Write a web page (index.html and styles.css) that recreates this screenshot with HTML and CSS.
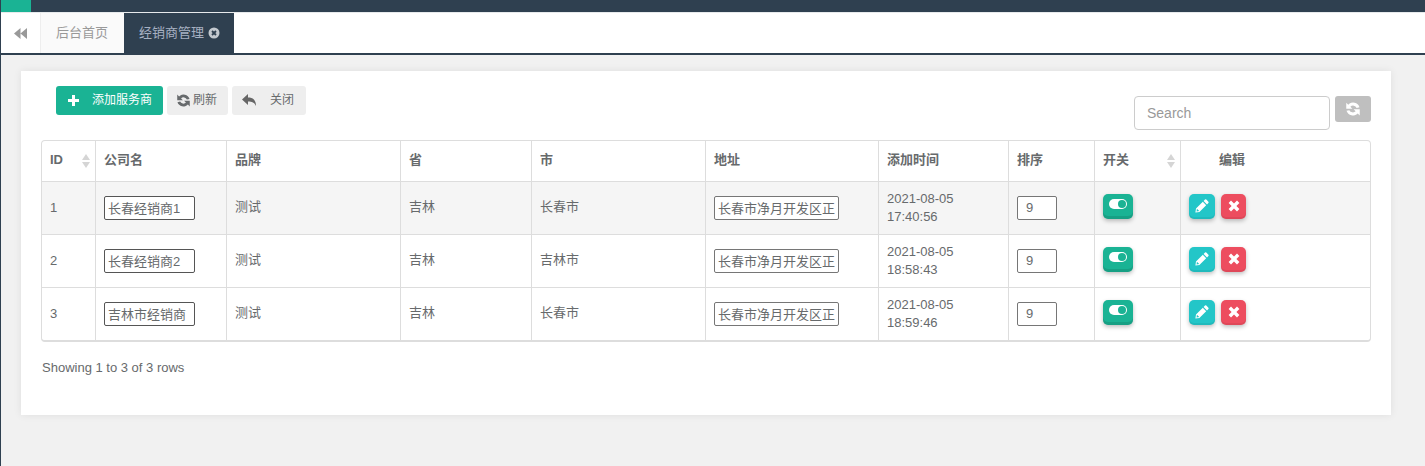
FILE: index.html
```html
<!DOCTYPE html>
<html lang="zh">
<head>
<meta charset="utf-8">
<title>经销商管理</title>
<link rel="stylesheet" href="styles.css">
</head>
<body>
<svg class="sprite" width="0" height="0" aria-hidden="true">
  <symbol id="i-refresh" viewBox="1.4 1.4 11.2 11.2"><path d="M12.200 5.600A5.400 5.400 0 0 0 3.200 3.500L1.600 1.900v4.900h4.900L4.900 5.200a3.100 3.100 0 0 1 5 .9zM1.800 8.400a5.400 5.400 0 0 0 9 2.100l1.600 1.600V7.200H7.500L9.100 8.800a3.100 3.100 0 0 1-5-.9z" fill="currentColor"/></symbol>
  <symbol id="i-edit" viewBox="0 0 14 14"><path d="M10 .6a1 1 0 0 1 1.300 0l2.100 2.100a1 1 0 0 1 0 1.300L12 5.400 8.600 2zM7.800 2.800l3.400 3.400-6.800 6.800L.4 13.600 1 9.600zM1.900 9.800l-.3 2.600 2.600-.3z" fill="currentColor" fill-rule="evenodd"/></symbol>
  <symbol id="i-x" viewBox="0 0 12 12"><path d="M3 .6L6 3.600l3-3L11.400 3l-3 3 3 3L9 11.400l-3-3-3 3L.6 9l3-3-3-3z" fill="currentColor"/></symbol>
</svg>
<header class="topbar"><div class="topbar-mark"></div></header>
<nav class="tabs">
  <div class="tab-back">
    <svg width="13" height="11" viewBox="0 0 13 11"><path d="M6.500 0v11L0 5.500zM13 0v11L6.500 5.500z" fill="#999"/></svg>
  </div>
  <div class="tab">后台首页</div>
  <div class="tab tab-active">经销商管理
    <svg class="tab-close" width="12" height="12" viewBox="0 0 12 12"><circle cx="6" cy="6" r="5.500" fill="#c3c9cf"/><path d="M4 4l4 4M8 4l-4 4" stroke="#2f4050" stroke-width="1.800"/></svg>
  </div>
</nav>
<main class="content">
  <section class="card">
    <div class="toolbar">
      <div class="actions">
        <button class="btn btn-green">
          <svg class="plus" width="11" height="11" viewBox="0 0 11 11"><path d="M4 0h3v4h4v3H7v4H4V7H0V4h4z" fill="#fff"/></svg>添加服务商
        </button>
        <button class="btn btn-grey"><svg class="ico-refresh" width="13" height="13"><use href="#i-refresh"/></svg>刷新</button>
        <button class="btn btn-grey btn-close">
          <svg class="ico-back" width="15" height="13" viewBox="0 0 15 13"><path d="M6 0v3.500c5 0 8 2.500 8 8.500-1.500-3.500-4-4.500-8-4.500V11L0 5.500z" fill="#666"/></svg>关闭
        </button>
      </div>
      <div class="search">
        <input class="search-input" type="text" placeholder="Search">
        <button class="search-btn"><svg width="14" height="14"><use href="#i-refresh"/></svg></button>
      </div>
    </div>
    <div class="table-wrap">
      <table class="grid">
        <colgroup>
          <col class="c-id"><col class="c-name"><col class="c-brand"><col class="c-prov"><col class="c-city"><col class="c-addr"><col class="c-time"><col class="c-sort"><col class="c-switch"><col class="c-edit">
        </colgroup>
        <thead>
          <tr>
            <th class="sortable">ID</th><th>公司名</th><th>品牌</th><th>省</th><th>市</th><th>地址</th><th>添加时间</th><th>排序</th><th class="sortable">开关</th><th class="th-edit">编辑</th>
          </tr>
        </thead>
        <tbody>
          <tr class="row-shade">
            <td>1</td><td><input class="cell-input name-input" value="长春经销商1"></td><td class="cjk">测试</td><td class="cjk">吉林</td><td class="cjk">长春市</td>
            <td><input class="cell-input addr-input" value="长春市净月开发区正"></td><td>2021-08-05<br>17:40:56</td><td><input class="cell-input sort-input" value="9"></td>
            <td><button class="op op-green"><span class="toggle"></span></button></td>
            <td><button class="op op-cyan"><svg width="14" height="14"><use href="#i-edit"/></svg></button><button class="op op-red"><svg width="12" height="12"><use href="#i-x"/></svg></button></td>
          </tr>
          <tr>
            <td>2</td><td><input class="cell-input name-input" value="长春经销商2"></td><td class="cjk">测试</td><td class="cjk">吉林</td><td class="cjk">吉林市</td>
            <td><input class="cell-input addr-input" value="长春市净月开发区正"></td><td>2021-08-05<br>18:58:43</td><td><input class="cell-input sort-input" value="9"></td>
            <td><button class="op op-green"><span class="toggle"></span></button></td>
            <td><button class="op op-cyan"><svg width="14" height="14"><use href="#i-edit"/></svg></button><button class="op op-red"><svg width="12" height="12"><use href="#i-x"/></svg></button></td>
          </tr>
          <tr>
            <td>3</td><td><input class="cell-input name-input" value="吉林市经销商"></td><td class="cjk">测试</td><td class="cjk">吉林</td><td class="cjk">长春市</td>
            <td><input class="cell-input addr-input" value="长春市净月开发区正"></td><td>2021-08-05<br>18:59:46</td><td><input class="cell-input sort-input" value="9"></td>
            <td><button class="op op-green"><span class="toggle"></span></button></td>
            <td><button class="op op-cyan"><svg width="14" height="14"><use href="#i-edit"/></svg></button><button class="op op-red"><svg width="12" height="12"><use href="#i-x"/></svg></button></td>
          </tr>
        </tbody>
      </table>
    </div>
    <p class="summary">Showing 1 to 3 of 3 rows</p>
  </section>
</main>
</body>
</html>
```
FILE: styles.css
```css
* { box-sizing: border-box; }
html, body { height: 100%; }
body {
  margin: 0;
  height: 466px;
  overflow: hidden;
  background: #f1f1f1;
  border-left: 1px solid #2f4050;
  color: #676a6c;
  font: 13px/20px "Liberation Sans", "Noto Sans CJK SC", sans-serif;
}
.sprite { position: absolute; }
.topbar { height: 12px; background: #2f4050; margin-left: -1px; }
.topbar-mark { width: 31px; height: 12px; background: #1ab394; }
.tabs {
  display: flex;
  height: 43px;
  margin-left: -1px;
  background: #fff;
  border-top: 1px solid #e7eaec;
  border-bottom: 2px solid #2f4050;
}
.tab-back {
  width: 41px;
  display: flex;
  align-items: center;
  justify-content: center;
  border-right: 1px solid #eee;
}
.tab {
  display: flex;
  align-items: center;
  padding: 0 16px 0 15px;
  background: #fafafa;
  color: #999;
  font-size: 13px;
}
.tab-active { background: #2f4050; color: #a7b1c2; padding: 0 14px 0 15px; gap: 4px; }
.content { padding: 16px 34px 0 20px; }
.card {
  height: 344px;
  background: #fff;
  padding: 15px 20px 0;
  box-shadow: 0 0 8px rgba(0, 0, 0, 0.08);
}
.toolbar { display: flex; justify-content: space-between; height: 54px; }
.actions { display: flex; gap: 4px; padding-left: 15px; align-items: flex-start; }
.btn {
  height: 29px;
  border: 0;
  border-radius: 3px;
  font: 12px/29px "Liberation Sans", "Noto Sans CJK SC", sans-serif;
  display: flex;
  align-items: center;
  padding: 0;
}
.btn-green { width: 107px; background: #1ab394; color: #fff; padding-left: 12px; }
.plus { margin-right: 13px; }
.btn-grey { background: #eee; color: #676a6c; width: 61px; padding-left: 10px; }
.btn-close { width: 74px; }
.ico-refresh { margin-right: 3px; }
.ico-back { margin-right: 13px; }
.search { display: flex; gap: 5px; align-items: flex-start; padding-top: 10px; }
.search-input {
  width: 196px;
  height: 34px;
  border: 1px solid #ccc;
  border-radius: 4px;
  padding: 0 12px;
  font: 14px "Liberation Sans", sans-serif;
  color: #555;
  outline: 0;
}
.search-input::placeholder { color: #999; }
.search-btn {
  width: 36px;
  height: 26px;
  padding: 0;
  border: 0;
  border-radius: 3px;
  background: #bfbfbf;
  color: #fff;
  display: flex;
  align-items: center;
  justify-content: center;
}
.table-wrap {
  width: 1330px;
  border: 1px solid #ddd;
  border-bottom-width: 2px;
  border-radius: 4px;
  overflow: hidden;
}
.grid {
  width: 1328px;
  border-collapse: separate;
  border-spacing: 0;
  table-layout: fixed;
  font-size: 13px;
}
.c-id { width: 54px; }
.c-name { width: 131px; }
.c-brand { width: 174px; }
.c-prov { width: 131px; }
.c-city { width: 174px; }
.c-addr { width: 173px; }
.c-time { width: 130px; }
.c-sort { width: 86px; }
.c-switch { width: 86px; }
.c-edit { width: 189px; }
th, td {
  border-right: 1px solid #ddd;
  border-bottom: 1px solid #ddd;
  text-align: left;
  padding: 0 8px;
}
th:last-child, td:last-child { border-right: 0; }
th { height: 41px; padding-bottom: 2px; font-weight: 700; color: #676a6c; }
td { height: 53px; line-height: 18px; color: #676a6c; }
td.cjk { padding-bottom: 2px; }
tbody tr:last-child td { height: 52px; border-bottom: 0; }
.row-shade td { background: #f5f5f5; }
.sortable { position: relative; }
.sortable::before,
.sortable::after {
  content: "";
  position: absolute;
  right: 5px;
  border-left: 4px solid transparent;
  border-right: 4px solid transparent;
}
.sortable::before { top: 13px; border-bottom: 6px solid #d5d5d5; }
.sortable::after { top: 21px; border-top: 6px solid #d5d5d5; }
.th-edit { padding-left: 38px; }
.cell-input {
  height: 24px;
  display: block;
  border: 1px solid #767676;
  border-radius: 2px;
  background: #fff;
  color: #676a6c;
  font: 13px "Liberation Sans", "Noto Sans CJK SC", sans-serif;
  padding: 0 3px 2px;
}
.name-input { width: 91px; border-color: #555; }
.addr-input { width: 125px; }
.sort-input { width: 40px; padding-left: 8px; }
.op {
  width: 26px;
  height: 25px;
  border: 0;
  border-radius: 5px;
  padding: 0;
  color: #fff;
  display: inline-flex;
  align-items: center;
  justify-content: center;
  vertical-align: middle;
  margin-top: -4px;
}
.op-green { width: 30px; background: #1ab394; box-shadow: 0 2px 4px rgba(0, 0, 0, 0.25), inset 0 -3px 0 rgba(0, 0, 0, 0.1); }
.op-cyan { background: #23c6c8; box-shadow: 0 2px 4px rgba(0, 0, 0, 0.25), inset 0 -2px 0 rgba(0, 0, 0, 0.06); }
.op-red { width: 25px; margin-left: 6px; background: #ed4d5f; box-shadow: 0 2px 4px rgba(0, 0, 0, 0.25), inset 0 -2px 0 rgba(0, 0, 0, 0.06); }
.toggle {
  width: 18px;
  height: 10px;
  margin-top: -4px;
  border-radius: 5px;
  background: #fff;
  position: relative;
}
.toggle::after {
  content: "";
  position: absolute;
  right: 1px;
  top: 1px;
  width: 8px;
  height: 8px;
  border-radius: 50%;
  background: #1ab394;
}
.summary { margin: 16px 0 0 1px; font-size: 13px; line-height: 20px; color: #676a6c; }
```
